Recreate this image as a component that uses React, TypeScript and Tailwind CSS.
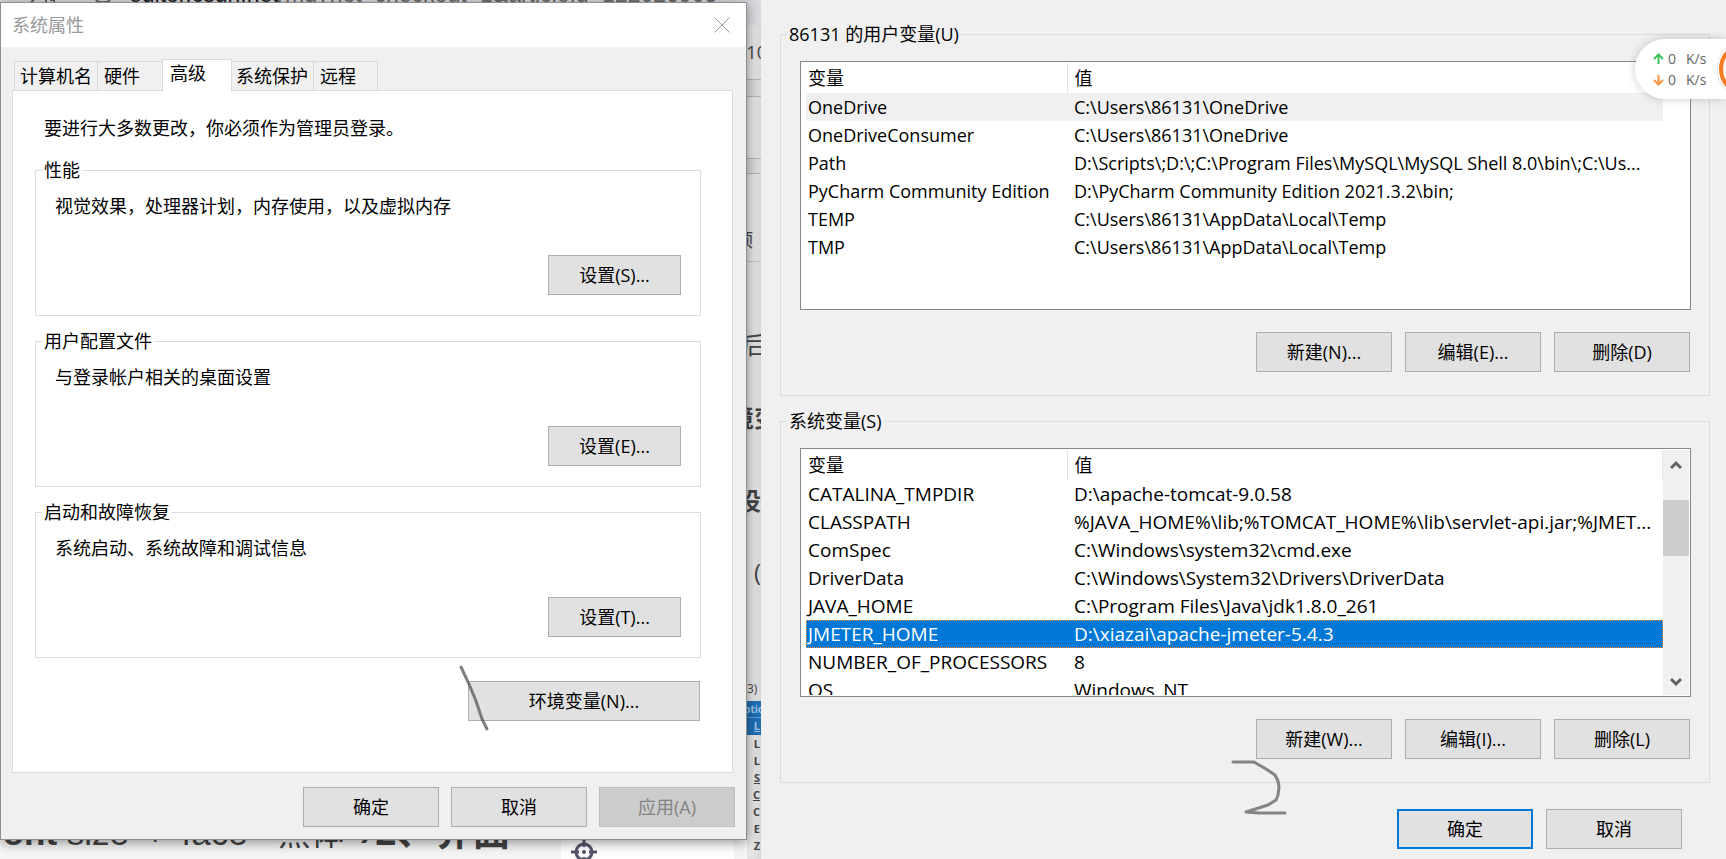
import React from 'react';

type Variable = { name: string; value: string };

const userVariables: Variable[] = [
  { name: 'OneDrive', value: 'C:\\Users\\86131\\OneDrive' },
  { name: 'OneDriveConsumer', value: 'C:\\Users\\86131\\OneDrive' },
  { name: 'Path', value: 'D:\\Scripts\\;D:\\;C:\\Program Files\\MySQL\\MySQL Shell 8.0\\bin\\;C:\\Us...' },
  { name: 'PyCharm Community Edition', value: 'D:\\PyCharm Community Edition 2021.3.2\\bin;' },
  { name: 'TEMP', value: 'C:\\Users\\86131\\AppData\\Local\\Temp' },
  { name: 'TMP', value: 'C:\\Users\\86131\\AppData\\Local\\Temp' },
];

const systemVariables: Variable[] = [
  { name: 'CATALINA_TMPDIR', value: 'D:\\apache-tomcat-9.0.58' },
  { name: 'CLASSPATH', value: '%JAVA_HOME%\\lib;%TOMCAT_HOME%\\lib\\servlet-api.jar;%JMET...' },
  { name: 'ComSpec', value: 'C:\\Windows\\system32\\cmd.exe' },
  { name: 'DriverData', value: 'C:\\Windows\\System32\\Drivers\\DriverData' },
  { name: 'JAVA_HOME', value: 'C:\\Program Files\\Java\\jdk1.8.0_261' },
  { name: 'JMETER_HOME', value: 'D:\\xiazai\\apache-jmeter-5.4.3' },
  { name: 'NUMBER_OF_PROCESSORS', value: '8' },
  { name: 'OS', value: 'Windows_NT' },
];

const tabs = [
  { label: '计算机名', className: 'h-[30px] w-[84px] bg-[#f0f0f0] pl-[5px]' },
  { label: '硬件', className: 'h-[30px] w-[66px] bg-[#f0f0f0] pl-[6px]' },
  { label: '高级', className: 'z-10 h-8 w-[70px] border-b-0 bg-white pb-1 pl-[7px]' },
  { label: '系统保护', className: 'h-[30px] w-[83px] bg-[#f0f0f0] pl-[4px]' },
  { label: '远程', className: 'h-[30px] w-[65px] bg-[#f0f0f0] pl-[6px]' },
];

function Button({
  children,
  className = 'w-[136px]',
  primary = false,
  disabled = false,
}: {
  children: React.ReactNode;
  className?: string;
  primary?: boolean;
  disabled?: boolean;
}) {
  const tone = disabled
    ? 'border border-[#bfbfbf] bg-[#cccccc] text-[#838383]'
    : primary
      ? 'border-2 border-[#0078d7] bg-[#e1e1e1]'
      : 'border border-[#adadad] bg-[#e1e1e1]';
  return (
    <button type="button" disabled={disabled} className={`h-10 shrink-0 ${tone} ${className}`}>
      {children}
    </button>
  );
}

function SettingsGroup({ title, text, button }: { title: string; text: string; button: string }) {
  return (
    <fieldset className="flex h-[159px] flex-col border border-[#dcdcdc] pl-[19px] pr-[19px]">
      <legend className="-ml-[13px] px-[2px] leading-[26px]">{title}</legend>
      <p className="mt-[10px] leading-[26px]">{text}</p>
      <div className="mt-9 flex justify-end">
        <Button className="w-[133px]">{button}</Button>
      </div>
    </fieldset>
  );
}

function ScrollBar() {
  return (
    <div className="flex w-[26px] shrink-0 flex-col items-center bg-[#f0f0f0]">
      <button type="button" aria-label="向上滚动" className="flex h-[30px] items-center">
        <svg width="12" height="10" viewBox="0 0 12 10">
          <path d="M1 8 6 3l5 5" fill="none" stroke="#606060" strokeWidth="3" />
        </svg>
      </button>
      <div className="mt-5 h-14 w-full bg-[#cdcdcd]" />
      <button type="button" aria-label="向下滚动" className="mt-auto flex h-[26px] items-center">
        <svg width="12" height="10" viewBox="0 0 12 10">
          <path d="M1 2 6 7l5-5" fill="none" stroke="#606060" strokeWidth="3" />
        </svg>
      </button>
    </div>
  );
}

function VariableList({
  rows,
  focused,
  selected,
  scroll = false,
}: {
  rows: Variable[];
  focused?: string;
  selected?: string;
  scroll?: boolean;
}) {
  return (
    <div className="flex h-[249px] justify-between overflow-hidden border border-[#828790] bg-white py-px pl-[5px] pr-px">
      <div className={scroll ? 'min-w-0 flex-1 overflow-hidden' : 'mr-[26px] min-w-0 flex-1 overflow-hidden'}>
        <table
          className={
            scroll
              ? 'w-full table-fixed border-collapse text-left text-[19px] leading-7'
              : 'w-full table-fixed border-collapse text-left text-[18px] leading-7'
          }
        >
          <thead>
            <tr className="h-[30px] text-[18px]">
              <th className="w-[261px] border-r border-[#e5e5e5] p-0 pl-[2px] font-normal">变量</th>
              <th className={scroll ? 'border-r border-[#e5e5e5] p-0 pl-[7px] font-normal' : 'p-0 pl-[7px] font-normal'}>值</th>
            </tr>
          </thead>
          <tbody>
            {rows.map((row) => (
              <tr
                key={row.name}
                className={
                  row.name === selected
                    ? 'h-7 bg-[#0078d7] text-white outline-1 -outline-offset-1 outline-dotted outline-[#ff8728]'
                    : row.name === focused
                      ? 'h-7 bg-[#f0f0f0]'
                      : 'h-7'
                }
              >
                <td className="whitespace-nowrap p-0 pl-[2px]">{row.name}</td>
                <td className="overflow-hidden whitespace-nowrap p-0 pl-[7px]">{row.value}</td>
              </tr>
            ))}
          </tbody>
        </table>
      </div>
      {scroll && <ScrollBar />}
    </div>
  );
}

function VariableGroup({
  title,
  keys,
  children,
}: {
  title: string;
  keys: string[];
  children: React.ReactNode;
}) {
  return (
    <fieldset className="h-[375px] border border-[#dcdcdc] pl-[19px] pr-[18px]">
      <legend className="-ml-[13px] px-[2px] leading-[26px]">{title}</legend>
      <div className="mt-[14px]">{children}</div>
      <div className="mt-[22px] flex justify-end gap-[13px] pr-px">
        {keys.map((label) => (
          <Button key={label}>{label}</Button>
        ))}
      </div>
    </fieldset>
  );
}

function SystemProperties() {
  return (
    <section className="relative z-10 flex h-[838px] flex-col border border-[#8f8f8f] bg-[#f0f0f0] shadow-[0_2px_12px_rgba(0,0,0,0.45)]">
      <header className="flex h-11 shrink-0 items-center justify-between bg-white pl-[11px] pr-4 text-[#999999]">
        <h1>系统属性</h1>
        <button type="button" aria-label="关闭">
          <svg width="16" height="16" viewBox="0 0 16 16">
            <path d="M.5.5l15 15M15.5.5l-15 15" stroke="#999999" />
          </svg>
        </button>
      </header>

      <div className="flex flex-col pl-[11px] pr-[13px] pt-3">
        <div role="tablist" className="-mb-px flex items-end pl-[2px]">
          {tabs.map((tab) => (
            <button
              key={tab.label}
              type="button"
              role="tab"
              aria-selected={tab.label === '高级'}
              className={`relative -mr-px whitespace-nowrap border border-[#dadada] text-left ${tab.className}`}
            >
              {tab.label}
            </button>
          ))}
        </div>

        <div role="tabpanel" className="flex h-[683px] flex-col border border-[#dcdcdc] bg-white pl-[22px] pr-[31px]">
          <p className="mt-6 pl-[9px] leading-[26px]">要进行大多数更改，你必须作为管理员登录。</p>
          <div className="mt-4 flex flex-col gap-3">
            <SettingsGroup title="性能" text="视觉效果，处理器计划，内存使用，以及虚拟内存" button="设置(S)..." />
            <SettingsGroup title="用户配置文件" text="与登录帐户相关的桌面设置" button="设置(E)..." />
            <SettingsGroup title="启动和故障恢复" text="系统启动、系统故障和调试信息" button="设置(T)..." />
          </div>
          <div className="mt-[23px] flex justify-end pr-px">
            <Button className="w-[232px]">环境变量(N)...</Button>
          </div>
        </div>
      </div>

      <footer className="mt-[14px] flex justify-end gap-3 pr-[11px]">
        <Button>确定</Button>
        <Button>取消</Button>
        <Button disabled>应用(A)</Button>
      </footer>

      {/* pen mark beside the environment variables button */}
      <svg className="absolute left-[456px] top-[660px]" width="34" height="72" viewBox="0 0 34 72">
        <path d="M4 4 12 21l7 17 6 18 5 10" fill="none" stroke="#555" strokeOpacity=".75" strokeWidth="3" strokeLinecap="round" />
      </svg>
    </section>
  );
}

function EnvironmentVariables() {
  return (
    <section className="relative bg-[#f0f0f0] pl-[19px] pr-4 pt-[21px]">
      <div className="flex flex-col gap-3">
        <VariableGroup title="86131 的用户变量(U)" keys={['新建(N)...', '编辑(E)...', '删除(D)']}>
          <VariableList rows={userVariables} focused="OneDrive" />
        </VariableGroup>
        <VariableGroup title="系统变量(S)" keys={['新建(W)...', '编辑(I)...', '删除(L)']}>
          <VariableList rows={systemVariables} selected="JMETER_HOME" scroll />
        </VariableGroup>
      </div>
      <footer className="mt-[26px] flex justify-end gap-[13px] pr-7">
        <Button primary>确定</Button>
        <Button>取消</Button>
      </footer>

      <svg className="absolute left-[468px] top-[756px]" width="60" height="62" viewBox="0 0 60 62">
        <path
          d="M4 6H25L37 13 46 19 49 25 50 31 49 39 47 44 39 49 17 56 30 57H56"
          fill="none"
          stroke="#555"
          strokeOpacity=".7"
          strokeWidth="3"
          strokeLinecap="round"
          strokeLinejoin="round"
        />
      </svg>
    </section>
  );
}

function NetworkMeter() {
  return (
    <aside className="absolute right-0 top-[39px] z-20 flex h-[60px] w-[91px] items-center overflow-hidden rounded-l-full bg-white pl-[18px] text-[14px] leading-[21px] text-[#666666] shadow-[0_0_10px_rgba(0,0,0,0.2)]">
      <div>
        <div className="flex items-center">
          <svg width="11" height="12" viewBox="0 0 11 12">
            <path d="M5.500 11V2M1 6l4.500-4.500L10 6" fill="none" stroke="#3cc35a" strokeWidth="2" />
          </svg>
          <span className="ml-1 w-[18px]">0</span>
          <span>K/s</span>
        </div>
        <div className="flex items-center">
          <svg width="11" height="12" viewBox="0 0 11 12">
            <path d="M5.500 1v9M1 6l4.500 4.500L10 6" fill="none" stroke="#ff9440" strokeWidth="2" />
          </svg>
          <span className="ml-1 w-[18px]">0</span>
          <span>K/s</span>
        </div>
      </div>
      <svg className="absolute right-0 top-0" width="10" height="60" viewBox="0 0 10 60">
        <circle cx="30" cy="30" r="29" fill="#fff" stroke="#e4e4e4" />
        <circle cx="30" cy="30" r="25" fill="#fff" stroke="#f47b20" strokeWidth="4" />
      </svg>
    </aside>
  );
}

// Sliver of the page that stays visible between the two dialogs.
function PageSliver() {
  return (
    <div className="flex flex-col overflow-hidden bg-[#e6e6e6] text-[#444444] shadow-[inset_-4px_0_4px_rgba(0,0,0,0.06)]">
      <div className="h-[25px] bg-[#d9dbde]" />
      <div className="flex h-[54px] items-center justify-center whitespace-nowrap">(10</div>
      <div className="h-[18px] border-y border-[#b4b4b4] bg-[#d9d9d9]" />
      <div className="h-[61px]" />
      <div className="h-4 border-y border-[#b4b4b4] bg-[#d9d9d9]" />
      <div className="flex h-[88px] items-end justify-end border-b border-[#c4c4c4] pb-[7px] pr-2 leading-7">顶</div>
      <div className="flex h-[166px] items-center justify-center text-2xl">后</div>
      <div className="-mt-7 flex h-9 items-center justify-center whitespace-nowrap text-2xl font-bold">境变</div>
      <div className="mt-[47px] flex h-9 items-center justify-end text-2xl font-bold">设</div>
      <div className="mt-[35px] flex h-9 items-center justify-end text-2xl">(</div>
      <div className="mt-[87px] flex h-6 items-center text-xs">3)</div>
      <div className="flex h-[17px] shrink-0 items-center justify-center border-b border-[#5b9bd5] bg-[#1f6fb5] text-[10px] font-bold text-[#9cc4e8]">
        ptio
      </div>
      <div className="flex h-[17px] shrink-0 items-center justify-end bg-[#1f6fb5] pr-px text-[11px] font-bold text-[#9cc4e8] underline">
        L
      </div>
      <ul className="flex flex-col items-end overflow-hidden pr-px text-[11px] font-bold leading-[17px]">
        <li>L</li>
        <li>L</li>
        <li className="underline">S</li>
        <li className="underline">C</li>
        <li>C</li>
        <li>E</li>
        <li>Z</li>
      </ul>
    </div>
  );
}

export default function App() {
  return (
    <main className="relative grid min-h-screen grid-cols-[minmax(0,747fr)_14px_minmax(0,965fr)] overflow-hidden bg-[#f0f0f0] font-['Open_Sans','Noto_Sans_CJK_SC',sans-serif] text-[18px] text-black">
      <div className="flex flex-col">
        <div className="flex h-[2px] items-end overflow-hidden bg-[#dfe1e5] font-['Liberation_Sans',sans-serif] text-[23px] leading-4 text-[#6b6b6b]">
          <svg className="shrink-0" width="129" height="2" viewBox="0 0 129 2">
            <path d="M34 0l-3 2M46 0v2M50 0h4v2M96 0c2 3 12 3 14 0" fill="none" stroke="#5f6368" strokeWidth="2" />
          </svg>
          <span className="text-[#222222]">editor.csdn.net</span>
          <span>/md?not_checkout=1&amp;articleId=122026905</span>
        </div>
        <SystemProperties />
        <div className="flex h-[19px] justify-between overflow-hidden bg-[#f5f5f5]">
          <p className="-ml-[9px] flex items-baseline self-end whitespace-nowrap font-['Liberation_Sans','Noto_Sans_CJK_SC',sans-serif] text-[35px] leading-[50px] text-[#444444]">
            <span>
              <b>font</b> size
            </span>
            <span className="ml-4">+</span>
            <span className="ml-4">face</span>
            <span className="ml-[30px] text-[33px]">黑体</span>
            <b className="ml-4">›</b>
            <b className="ml-1 text-[38px]">2、界面</b>
          </p>
          <div className="mr-[13px] h-full w-[173px] shrink-0 bg-white pl-[10px]">
            <svg width="26" height="26" viewBox="0 0 26 26">
              <g fill="none" stroke="#55556a" strokeWidth="3">
                <circle cx="13" cy="12" r="8" />
                <path d="M13 0v7M13 17v7M0 12h8M18 12h8" />
              </g>
              <circle cx="13" cy="12" r="2" fill="#55556a" />
            </svg>
          </div>
        </div>
      </div>
      <PageSliver />
      <EnvironmentVariables />
      <NetworkMeter />
    </main>
  );
}
